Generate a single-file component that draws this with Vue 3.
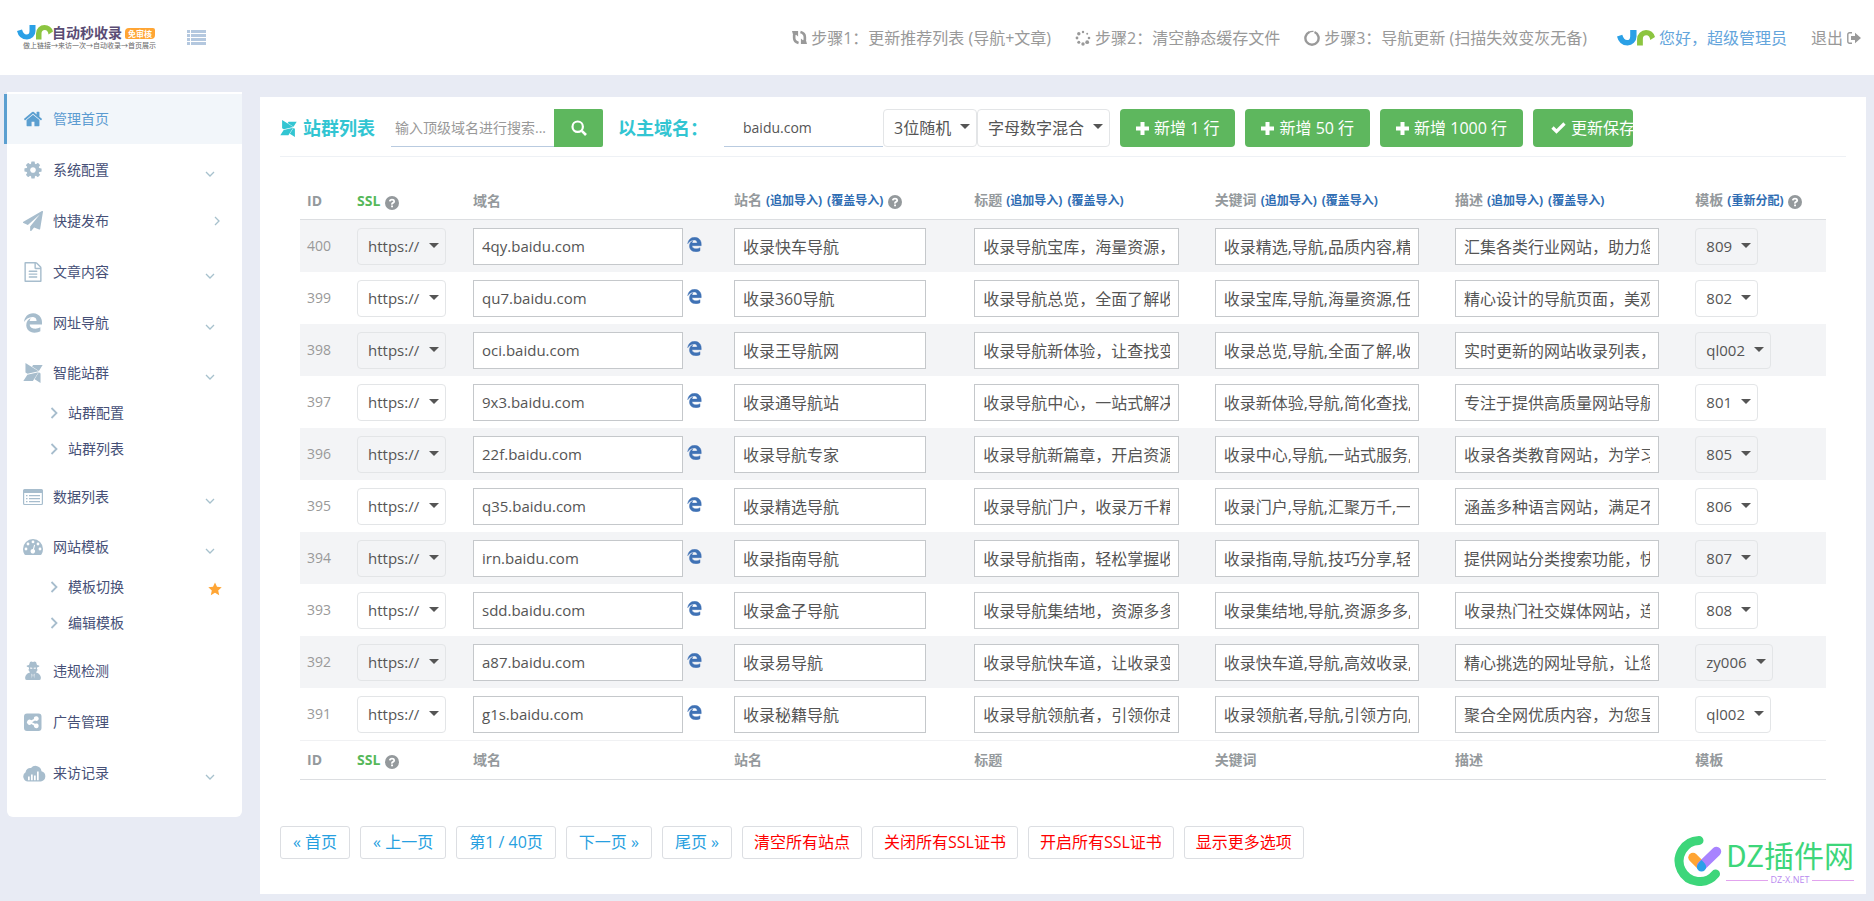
<script setup>
import { ref } from 'vue'

const icons = {
  home: { box: '0 0 1792 1792', d: 'M1472 992v480q0 26-19 45t-45 19h-384v-384h-256v384h-384q-26 0-45-19t-19-45v-480q0-1 .5-3t.5-3l575-474 575 474q1 2 1 6zm223-69l-62 74q-8 9-21 11h-3q-13 0-21-7l-692-577-692 577q-12 8-24 7-13-2-21-11l-62-74q-8-10-7-23.5t11-21.5l719-599q32-26 76-26t76 26l244 204v-195q0-14 9-23t23-9h192q14 0 23 9t9 23v408l219 182q10 8 11 21.5t-7 23.5z' },
  cog: { box: '0 0 1792 1792', d: 'M1152 896q0-106-75-181t-181-75-181 75-75 181 75 181 181 75 181-75 75-181zm512-109v222q0 12-8 23t-20 13l-185 28q-19 54-39 91 35 50 107 138 10 12 10 25t-9 23q-27 37-99 108t-94 71q-12 0-26-9l-138-108q-44 23-91 38-16 136-29 186-7 28-36 28h-222q-14 0-24.5-8.5t-11.5-21.5l-28-184q-49-16-90-37l-141 107q-10 9-25 9-14 0-25-11-126-114-165-168-7-10-7-23 0-12 8-23 15-21 51-66.5t54-70.5q-27-50-41-99l-183-27q-13-2-21-12.5t-8-23.5v-222q0-12 8-23t19-13l186-28q14-46 39-92-40-57-107-138-10-12-10-24 0-10 9-23 26-36 98.5-107.5t94.5-71.5q13 0 26 10l138 107q44-23 91-38 16-136 29-186 7-28 36-28h222q14 0 24.5 8.5t11.5 21.5l28 184q49 16 90 37l142-107q9-9 24-9 13 0 25 10 129 119 165 170 7 8 7 22 0 12-8 23-15 21-51 66.5t-54 70.5q26 50 41 98l183 28q13 2 21 12.5t8 23.5z' },
  plane: { box: '0 0 1792 1792', d: 'M1764 11q33 24 27 64l-256 1536q-5 29-32 45-14 8-31 8-11 0-24-5l-453-185-242 295q-18 23-49 23-13 0-22-4-19-7-30.5-23.5t-11.5-36.5v-349l864-1059-1069 925-395-162q-37-14-40-55-2-40 32-59l1664-960q15-9 32-9 20 0 36 11z' },
  file: { box: '0 0 1792 1792', d: 'M1596 380q28 28 48 76t20 88v1152q0 40-28 68t-68 28h-1344q-40 0-68-28t-28-68v-1600q0-40 28-68t68-28h896q40 0 88 20t76 48zm-444-244v376h376q-10-29-22-41l-313-313q-12-12-41-22zm384 1528v-1024h-416q-40 0-68-28t-28-68v-416h-768v1536h1280zm-1024-864q0-14 9-23t23-9h704q14 0 23 9t9 23v64q0 14-9 23t-23 9h-704q-14 0-23-9t-9-23v-64zm736 224q14 0 23 9t9 23v64q0 14-9 23t-23 9h-704q-14 0-23-9t-9-23v-64q0-14 9-23t23-9h704zm0 256q14 0 23 9t9 23v64q0 14-9 23t-23 9h-704q-14 0-23-9t-9-23v-64q0-14 9-23t23-9h704z' },
  edge: { box: '0 0 512 512', d: 'M25.714 228.163c.111-.162.23-.323.342-.485-.021.162-.045.323-.065.485h-.277zm460.572 15.508c0-44.032-7.754-84.465-28.801-122.405C416.498 47.879 343.912 8.001 258.893 8.001 118.962 7.724 40.617 113.214 26.056 227.679c42.429-61.312 117.073-121.376 220.375-124.966 0 0 109.666 0 99.419 104.957H169.997c6.369-37.386 18.554-58.986 34.339-78.926-75.048 34.893-121.85 96.1-120.742 188.315.83 71.448 50.124 144.836 120.743 171.976 83.357 31.847 192.776 7.2 240.132-21.323V363.307c-80.864 56.494-270.871 60.925-272.255-67.572h314.073v-52.064z' },
  modx: { box: '0 32 448 448', d: 'M356 241.8l36.7 23.7V480l-133-83.8L356 241.8zM440 75H226.3l-23 37.8 153.5 96.5L440 75zm-89 142.8L55.2 32v214.5l46 29L351 217.8zM97 294.2L8 437h213.7l125-200.5L97 294.2z' },
  list: { box: '0 0 20 20', d: 'M1.5 2h17A1.5 1.5 0 0 1 20 3.500v13a1.500 1.500 0 0 1-1.500 1.500h-17A1.500 1.500 0 0 1 0 16.500v-13A1.500 1.500 0 0 1 1.500 2zM1.200 6v10.500q0 .4.4.4h16.800q.4 0 .4-.4V6zM3 8h1.500v1.300H3zM6 8h11v1.300H6zM3 11h1.500v1.300H3zM6 11h11v1.300H6zM3 14h1.500v1.300H3zM6 14h11v1.300H6z' },
  gauge: { box: '0 0 20 20', d: 'M10 2A10 10 0 0 0 0 12q0 3 1.400 5.300.4.700 1.200.7h14.800q.8 0 1.200-.7Q20 15 20 12A10 10 0 0 0 10 2zM3 10.600a1.400 1.400 0 1 1 0 2.800 1.400 1.400 0 0 1 0-2.800zM5 5.600a1.400 1.400 0 1 1 0 2.800 1.400 1.400 0 0 1 0-2.800zM10 3.500a1.400 1.400 0 1 1 0 2.800 1.400 1.400 0 0 1 0-2.800zM15 5.600a1.400 1.400 0 1 1 0 2.800 1.400 1.400 0 0 1 0-2.800zM17 10.600a1.400 1.400 0 1 1 0 2.800 1.400 1.400 0 0 1 0-2.800zM11.100 7.700l1 .3-1.100 4.200a2.300 2.300 0 1 1-1-.3z' },
  spy: { box: '0 0 20 20', d: 'M7 1q1.200-.8 3 0 1.800-.8 3 0l1 3q2.500.4 2.500 1.100T14 6.400v2.100h.8q0 1-.9 1.200-.3 1-1 1.700l1 .3q3.600 1.300 4 5 .1 2.300-1.500 2.300H3.600Q2 19 2.100 16.700q.4-3.700 4-5l1-.3q-.7-.7-1-1.700-.9-.2-.9-1.200H6V6.400Q3.500 5.900 3.500 5.100T6 4zM7.200 6.600v1.200h2.100v-1zM10.700 6.800v1h2.100V6.600zM8.500 12.500l.9 1.200-.6 3.800zM11.500 12.500l-.9 1.200.6 3.800z' },
  share: { box: '0 0 20 20', d: 'M4 1.500h11.500a3 3 0 0 1 3 3V16a3 3 0 0 1-3 3H4a3 3 0 0 1-3-3V4.500a3 3 0 0 1 3-3zM13.300 4.200a2.400 2.400 0 0 0-2.400 2.700L8.300 8.300a2.600 2.600 0 1 0 0 3.800l2.600 1.400a2.400 2.400 0 1 0 1.100-1.700L9 10.200l3-1.600a2.400 2.400 0 1 0 1.300-4.400z' },
  cloud: { box: '0 0 23 18', d: 'M5 17.500A5 5 0 0 1 2.600 8.300 4.500 4.500 0 0 1 8 4a6 6 0 0 1 10.500 3.200A5.300 5.300 0 0 1 18 17.500zM5 12.500v3.700h1.700v-3.700zM8 10.500v5.700h1.700v-5.700zM11 11.500v4.700h1.700v-4.700zM14 7.500v8.700h1.700V7.500z' }
}
const markJ = 'M12.500 0h6v6a8.500 8.500 0 0 1-8.500 8.500Q2 14.500 0 6l5-1.500Q6.500 9.500 9.500 9.500q3 0 3-3.500z'
const markN = 'M19 14.500V8.500A8.500 8.500 0 0 1 27.500 0q6.500 0 8.500 6.500l-4.500 3Q31 5 27.800 5q-3.300 0-3.300 3.500v6z'

const menu = [
  { label: '管理首页', icon: 'home', active: true },
  { label: '系统配置', icon: 'cog', arrow: 'down' },
  { label: '快捷发布', icon: 'plane', arrow: 'right' },
  { label: '文章内容', icon: 'file', arrow: 'down' },
  { label: '网址导航', icon: 'edge', arrow: 'down' },
  { label: '智能站群', icon: 'modx', arrow: 'down', children: [{ label: '站群配置' }, { label: '站群列表' }] },
  { label: '数据列表', icon: 'list', arrow: 'down' },
  { label: '网站模板', icon: 'gauge', arrow: 'down', children: [{ label: '模板切换', star: true }, { label: '编辑模板' }] },
  { label: '违规检测', icon: 'spy' },
  { label: '广告管理', icon: 'share' },
  { label: '来访记录', icon: 'cloud', arrow: 'down' }
]

const columns = [
  { name: '站名', key: 'name', links: ['(追加导入)', '(覆盖导入)'], help: true },
  { name: '标题', key: 'title', links: ['(追加导入)', '(覆盖导入)'] },
  { name: '关键词', key: 'keys', links: ['(追加导入)', '(覆盖导入)'] },
  { name: '描述', key: 'desc', links: ['(追加导入)', '(覆盖导入)'] },
  { name: '模板', key: 'tpl', links: ['(重新分配)'], help: true }
]
const textColumns = columns.slice(0, 4)

const rows = ref([
  { id: 400, host: '4qy.baidu.com', name: '收录快车导航', title: '收录导航宝库，海量资源，一键直达', keys: '收录精选,导航,品质内容,精选资源', desc: '汇集各类行业网站，助力您的发展', tpl: '809' },
  { id: 399, host: 'qu7.baidu.com', name: '收录360导航', title: '收录导航总览，全面了解收录资源', keys: '收录宝库,导航,海量资源,任您选择', desc: '精心设计的导航页面，美观实用', tpl: '802' },
  { id: 398, host: 'oci.baidu.com', name: '收录王导航网', title: '收录导航新体验，让查找变得简单', keys: '收录总览,导航,全面了解,收录资源', desc: '实时更新的网站收录列表，随时查看', tpl: 'ql002' },
  { id: 397, host: '9x3.baidu.com', name: '收录通导航站', title: '收录导航中心，一站式解决需求', keys: '收录新体验,导航,简化查找,轻松', desc: '专注于提供高质量网站导航服务', tpl: '801' },
  { id: 396, host: '22f.baidu.com', name: '收录导航专家', title: '收录导航新篇章，开启资源之旅', keys: '收录中心,导航,一站式服务,便捷', desc: '收录各类教育网站，为学习助力', tpl: '805' },
  { id: 395, host: 'q35.baidu.com', name: '收录精选导航', title: '收录导航门户，收录万千精彩', keys: '收录门户,导航,汇聚万千,一网打尽', desc: '涵盖多种语言网站，满足不同需求', tpl: '806' },
  { id: 394, host: 'irn.baidu.com', name: '收录指南导航', title: '收录导航指南，轻松掌握收录技巧', keys: '收录指南,导航,技巧分享,轻松掌握', desc: '提供网站分类搜索功能，快速查找', tpl: '807' },
  { id: 393, host: 'sdd.baidu.com', name: '收录盒子导航', title: '收录导航集结地，资源多多分享', keys: '收录集结地,导航,资源多多,分享', desc: '收录热门社交媒体网站，连接你我', tpl: '808' },
  { id: 392, host: 'a87.baidu.com', name: '收录易导航', title: '收录导航快车道，让收录变得高效', keys: '收录快车道,导航,高效收录,快速', desc: '精心挑选的网址导航，让您省心', tpl: 'zy006' },
  { id: 391, host: 'g1s.baidu.com', name: '收录秘籍导航', title: '收录导航领航者，引领你走向成功', keys: '收录领航者,导航,引领方向,成功', desc: '聚合全网优质内容，为您呈现精彩', tpl: 'ql002' }
])

const addButtons = ['新增 1 行', '新增 50 行', '新增 1000 行']
const pageLinks = ['« 首页', '« 上一页', '第1 / 40页', '下一页 »', '尾页 »']
const actions = ['清空所有站点', '关闭所有SSL证书', '开启所有SSL证书', '显示更多选项']
const dots = [[8, 2, 1.2], [12.200, 3.800, 1], [14, 8, 1.300], [12.200, 12.200, 1.900], [8, 14, 1.700], [3.800, 12.200, 1.500], [2, 8, 1.400], [3.800, 3.800, 1.700]]
const mainHost = ref('baidu.com')
const keyword = ref('')
</script>

<template>
  <div class="page">
    <header class="topbar">
      <a class="brand" href="#" aria-label="自动秒收录">
        <svg class="mark" viewBox="0 0 36 15" aria-hidden="true">
          <path :d="markJ" fill="#2aa0e6" /><path :d="markN" fill="#8cc540" />
        </svg>
        <span class="brand-line"><b>自动秒收录</b><em>免审核</em></span>
        <small>做上链接→来访一次→自动收录→首页展示</small>
      </a>
      <button class="toggler" type="button" aria-label="菜单">
        <svg viewBox="0 0 19 15" width="19" height="15" aria-hidden="true">
          <path d="M0 0h3v3H0zM4 0h15v3H4zM0 4h3v3H0zM4 4h15v3H4zM0 8h3v3H0zM4 8h15v3H4zM0 12h3v3H0zM4 12h15v3H4z" fill="#b4c8df" />
        </svg>
      </button>
      <nav class="steps">
        <a href="#">
          <svg viewBox="0 0 16 16" width="15" height="15" fill="none" stroke="currentColor" stroke-width="2.800" aria-hidden="true">
            <path d="M7 13.800Q2.300 12.500 2.300 8.500V5M9 2.200q4.700 1.300 4.700 5.300V11" />
            <path d="M0 1h6.500v6L4.300 5 1.500 6.500zM16 15H9.500V9l2.200 2 2.800-1.500z" fill="currentColor" stroke="none" />
          </svg>步骤1：更新推荐列表 (导航+文章)</a>
        <a href="#">
          <svg viewBox="0 0 16 16" width="16" height="16" fill="currentColor" aria-hidden="true">
            <circle v-for="(d, i) in dots" :key="i" :cx="d[0]" :cy="d[1]" :r="d[2]" />
          </svg>步骤2：清空静态缓存文件</a>
        <a href="#">
          <svg viewBox="0 0 16 16" width="16" height="16" aria-hidden="true">
            <path d="M10.500 2A6.600 6.600 0 1 1 5.500 2" fill="none" stroke="currentColor" stroke-width="2.400" />
            <path d="M5 2.300Q6.500 1.300 9.500 1.400" fill="none" stroke="currentColor" stroke-width="1.400" />
          </svg>步骤3：导航更新 (扫描失效变灰无备)</a>
        <a class="user" href="#">
          <svg class="mark" viewBox="0 0 36 15" aria-hidden="true">
            <path :d="markJ" fill="#2aa0e6" /><path :d="markN" fill="#8cc540" />
          </svg>您好，超级管理员</a>
        <a href="#">退出<svg viewBox="0 0 14 12" width="14" height="12" aria-hidden="true">
            <path d="M5 .8H2.500A1.700 1.700 0 0 0 .8 2.500v7a1.700 1.700 0 0 0 1.700 1.700H5" fill="none" stroke="currentColor" stroke-width="1.400" />
            <path d="M4 4h4V.8L14 6l-6 5.200V8H4z" fill="currentColor" />
          </svg></a>
      </nav>
    </header>

    <div class="body">
      <aside class="sidebar">
        <ul>
          <li v-for="m in menu" :key="m.label" :class="{ active: m.active, open: m.children }">
            <a class="item" href="#">
              <svg class="mi" :class="m.icon" :viewBox="icons[m.icon].box" aria-hidden="true">
                <path :d="icons[m.icon].d" fill="currentColor" fill-rule="evenodd" />
              </svg>
              <span>{{ m.label }}</span>
              <svg v-if="m.arrow" class="arrow" :class="m.arrow" viewBox="0 0 10 10" aria-hidden="true">
                <path :d="m.arrow === 'down' ? 'M1 3l4 4 4-4' : 'M3 1l4 4-4 4'" fill="none" stroke="currentColor" stroke-width="1.300" />
              </svg>
            </a>
            <ul v-if="m.children" class="sub">
              <li v-for="c in m.children" :key="c.label">
                <a href="#">
                  <svg viewBox="0 0 8 12" width="8" height="12" aria-hidden="true"><path d="M1.500 1l5 5-5 5" fill="none" stroke="#a7bdcd" stroke-width="1.800" /></svg>
                  <span>{{ c.label }}</span>
                  <svg v-if="c.star" class="star" viewBox="0 0 14 14" aria-hidden="true"><path d="M7 .5l2 4.300 4.700.5-3.500 3.200 1 4.700L7 10.800l-4.200 2.400 1-4.700L.3 5.300 5 4.800z" fill="#ffa534" /></svg>
                </a>
              </li>
            </ul>
          </li>
        </ul>
      </aside>

      <main class="card">
        <form class="toolbar" @submit.prevent>
          <h1>
            <svg :viewBox="icons.modx.box" width="17" height="17" aria-hidden="true"><path :d="icons.modx.d" fill="currentColor" /></svg>站群列表
          </h1>
          <input v-model="keyword" class="line search" type="text" placeholder="输入顶级域名进行搜索..." aria-label="搜索域名">
          <button class="green find" type="submit" aria-label="搜索">
            <svg viewBox="0 0 16 16" width="16" height="16" aria-hidden="true"><path d="M10.800 10.800L15 15" stroke="#fff" stroke-width="2.600" /><circle cx="6.700" cy="6.700" r="5.200" fill="none" stroke="#fff" stroke-width="2.200" /></svg>
          </button>
          <label class="main-label" for="main-host">以主域名：</label>
          <input id="main-host" v-model="mainHost" class="line host" type="text">
          <span class="pick cjk"><select aria-label="随机位数"><option>3位随机</option></select></span>
          <span class="pick cjk"><select aria-label="组合方式"><option>字母数字混合</option></select></span>
          <button v-for="b in addButtons" :key="b" class="green add" type="button">
            <svg viewBox="0 0 13 13" width="13" height="13" aria-hidden="true"><path d="M4.500 0h4v4.500H13v4H8.500V13h-4V8.500H0v-4h4.500z" fill="#fff" /></svg>{{ b }}
          </button>
          <button class="green save" type="button">
            <svg viewBox="0 0 15 12" width="15" height="12" aria-hidden="true"><path d="M1.500 5.500l4 4 8-8" fill="none" stroke="#fff" stroke-width="3.200" /></svg>更新保存
          </button>
        </form>

        <div class="table-wrap">
          <table>
            <colgroup>
              <col class="c-id"><col class="c-ssl"><col class="c-host">
              <col v-for="c in textColumns" :key="c.key" class="c-text"><col>
            </colgroup>
            <thead>
              <tr>
                <th>ID</th>
                <th><span class="ssl">SSL</span><svg class="help" viewBox="0 0 14 14" role="img" aria-label="帮助"><circle cx="7" cy="7" r="7" fill="#94999c" /><path d="M4.800 5.400Q5 3.600 7 3.600t2.200 1.600Q9.200 6.300 8 6.900T7 8.600" fill="none" stroke="#fff" stroke-width="1.800" /><path d="M6.100 9.600h1.900v1.700H6.100z" fill="#fff" /></svg></th>
                <th>域名</th>
                <th v-for="c in columns" :key="c.key">{{ c.name }}<a v-for="l in c.links" :key="l" href="#">{{ l }}</a><svg v-if="c.help" class="help" viewBox="0 0 14 14" role="img" aria-label="帮助"><circle cx="7" cy="7" r="7" fill="#94999c" /><path d="M4.800 5.400Q5 3.600 7 3.600t2.200 1.600Q9.200 6.300 8 6.900T7 8.600" fill="none" stroke="#fff" stroke-width="1.800" /><path d="M6.100 9.600h1.900v1.700H6.100z" fill="#fff" /></svg></th>
              </tr>
            </thead>
            <tbody>
              <tr v-for="r in rows" :key="r.id">
                <td class="id">{{ r.id }}</td>
                <td><span class="pick"><select :aria-label="'协议 ' + r.id"><option>https://</option></select></span></td>
                <td>
                  <div class="host-cell">
                    <input v-model="r.host" type="text" :aria-label="'域名 ' + r.id">
                    <a href="#" aria-label="访问"><svg :viewBox="icons.edge.box" width="15" height="15" aria-hidden="true"><path :d="icons.edge.d" fill="#3f72b5" stroke="#3f72b5" stroke-width="14" /></svg></a>
                  </div>
                </td>
                <td v-for="c in textColumns" :key="c.key" :class="c.key">
                  <input v-model="r[c.key]" type="text" :aria-label="c.name + ' ' + r.id">
                </td>
                <td><span class="pick"><select :aria-label="'模板 ' + r.id"><option>{{ r.tpl }}</option></select></span></td>
              </tr>
            </tbody>
            <tfoot>
              <tr>
                <th>ID</th>
                <th><span class="ssl">SSL</span><svg class="help" viewBox="0 0 14 14" role="img" aria-label="帮助"><circle cx="7" cy="7" r="7" fill="#94999c" /><path d="M4.800 5.400Q5 3.600 7 3.600t2.200 1.600Q9.200 6.300 8 6.900T7 8.600" fill="none" stroke="#fff" stroke-width="1.800" /><path d="M6.100 9.600h1.900v1.700H6.100z" fill="#fff" /></svg></th>
                <th>域名</th>
                <th v-for="c in columns" :key="c.key">{{ c.name }}</th>
              </tr>
            </tfoot>
          </table>
        </div>

        <div class="pager">
          <a v-for="p in pageLinks" :key="p" href="#">{{ p }}</a>
          <button v-for="a in actions" :key="a" type="button">{{ a }}</button>
        </div>

        <div class="stamp">
          <svg viewBox="0 0 48 50" width="48" height="50" fill="none" stroke-linecap="round" aria-hidden="true">
            <path d="M25 4.500A20.500 20.500 0 1 0 41.500 38" stroke="#3dd67a" stroke-width="9" />
            <path d="M19 21.500L27.500 30" stroke="#ffa534" stroke-width="9.500" />
            <path d="M42.500 15.500L27.500 30" stroke="#a883ff" stroke-width="9.500" />
            <path d="M27.500 24q5 4.500 4.600 7a4.600 4.600 0 0 1-9.200 0q0-2.500 4.600-7z" fill="#28a0e8" />
          </svg>
          <div>
            <strong>DZ插件网</strong>
            <span>DZ-X.NET</span>
          </div>
        </div>
      </main>
    </div>
  </div>
</template>

<style>
body { margin: 0; background: #e8ebf4; }
</style>

<style scoped>
.page {
  font: 14px/20px "Open Sans", "Noto Sans CJK SC", sans-serif;
  color: #555;
}
.page * { box-sizing: border-box; }
a { text-decoration: none; color: inherit; }
ul { list-style: none; margin: 0; padding: 0; }
button, input, select { font: inherit; color: inherit; margin: 0; }
svg { flex: none; }

.topbar {
  display: flex;
  align-items: center;
  height: 75px;
  padding: 0 13px 0 17px;
  background: #fff;
}
.brand {
  display: grid;
  grid-template-columns: 36px auto;
  width: 139px;
  line-height: 16px;
}
.mark { width: 36px; height: 15px; }
.brand-line { display: flex; align-items: center; gap: 3px; white-space: nowrap; }
.brand b { font-size: 14px; color: #5a4c74; margin-left: -1px; }
.brand em {
  background: #ffa534;
  color: #fff;
  font: bold 8px/11px "Noto Sans CJK SC", sans-serif;
  padding: 0 3px;
  border-radius: 4px 2px;
}
.brand small {
  grid-column: 1 / 3;
  font: 7px/9px "Noto Sans CJK SC", sans-serif;
  color: #666;
  padding-left: 6px;
  white-space: nowrap;
}
.toggler { display: flex; margin-left: 31px; padding: 0; border: 0; background: none; }
.steps {
  display: flex;
  gap: 24px;
  margin-left: auto;
  font-size: 16px;
  line-height: 24px;
  color: #999;
  white-space: nowrap;
}
.steps a { display: flex; align-items: center; gap: 4px; }
.steps .user { color: #64a5dc; margin-left: 6px; }
.steps .mark { width: 38px; height: 16px; }

.body { display: flex; align-items: flex-start; gap: 18px; padding: 17px 8px 7px 7px; }

.sidebar {
  flex: none;
  width: 235px;
  padding: 2px 0 19px;
  background: #fff;
  border-radius: 0 0 6px 6px;
  color: #465077;
}
.item { display: flex; align-items: center; height: 51px; padding: 0 20px 0 16px; }
.item span { flex: 1; margin-left: 10px; }
.mi { width: 20px; height: 20px; color: #a7bdcd; }
.mi.cloud { width: 23px; height: 18px; margin-right: -3px; }
.active .item {
  height: 50px;
  margin-left: -3px;
  border-left: 3px solid #5b9fd0;
  background: #f2f6fa;
  color: #5b9bd1;
}
.active .mi { color: #5b9fd0; }
.arrow { width: 10px; height: 10px; color: #a7c1cd; }
.arrow.down { margin: 9px 7px 0 0; }
.open .item { height: 47px; padding-top: 2px; }
.sub { padding-bottom: 4px; }
.sub a { display: flex; align-items: center; height: 36px; padding: 0 20px 0 43px; }
.sub span { flex: 1; margin-left: 10px; }
.star { width: 14px; height: 14px; margin-top: 3px; }

.card { flex: 1; min-width: 0; position: relative; padding: 12px 20px 35px; margin-top: 5px; background: #fff; }
.toolbar {
  display: flex;
  align-items: center;
  padding-bottom: 9px;
  border-bottom: 1px solid #eef1f5;
  font-size: 16px;
}
h1, .main-label { font-size: 18px; font-weight: bold; color: #32c5d2; margin: 0; white-space: nowrap; }
h1 { display: flex; align-items: center; gap: 6px; margin-right: 16px; }
.line { height: 38px; border: 0; border-bottom: 1px solid #b9cbe0; background: #fff; font-size: 14px; outline: 0; }
.line::placeholder { color: #999; opacity: 1; }
.search { width: 163px; padding: 0 4px; }
.host { width: 159px; padding: 0 19px; margin-left: 16px; }
.main-label { margin-left: 15px; width: 90px; }
.green {
  display: flex;
  align-items: center;
  gap: 5px;
  height: 38px;
  padding: 0 16px;
  border: 0;
  border-radius: 4px;
  background: #5eb75e;
  color: #fff;
  white-space: nowrap;
}
.find { width: 49px; padding: 0; justify-content: center; border-radius: 0 2px 2px 0; }
.add, .save { margin-left: 10px; }
.save { width: 100px; padding: 0 0 0 18px; overflow: hidden; }

.pick { display: inline-block; position: relative; vertical-align: middle; }
.pick select {
  appearance: none;
  display: block;
  height: 38px;
  padding: 0 25px 0 10px;
  border: 1px solid #e3e5e7;
  border-radius: 4px;
  background: transparent;
  font-size: 15px;
}
.pick.cjk select { font-size: 16px; padding-right: 24px; }
.pick::after {
  content: "";
  position: absolute;
  right: 7px;
  top: 15px;
  border: 5px solid transparent;
  border-top-color: #555;
  border-bottom: 0;
  pointer-events: none;
}

.table-wrap { margin: 25px 20px 0; }
table { width: 100%; table-layout: fixed; border-spacing: 0; }
.c-id { width: 50px; }
.c-ssl { width: 116px; }
.c-host { width: 17.1%; }
.c-text { width: 15.75%; }
th, td { padding: 0 7px; text-align: left; white-space: nowrap; }
th { height: 38px; color: #94999c; font-weight: bold; }
thead th, tfoot th { border-bottom: 1px solid #dcdee1; }
tfoot th { border-top: 1px solid #f0f1f3; height: 40px; }
th a { margin-left: 4px; font-size: 12px; color: #2f6db3; }
th a + a { margin-left: 5px; }
.ssl { color: #56b85a; }
.help { width: 14px; height: 14px; margin-left: 5px; vertical-align: -4px; }
td { height: 52px; }
tbody tr:nth-child(odd) { background: #f3f4f6; }
.id { color: #999; }
td input {
  width: 100%;
  height: 37px;
  padding: 0 8px;
  border: 1px solid #c5c8cb;
  background: #fff;
  font-size: 16px;
  vertical-align: middle;
}
td .pick select { height: 37px; }
td.name input { width: calc(100% - 34px); }
td.title input, td.keys input, td.desc input { width: calc(100% - 22px); }
.host-cell { display: flex; align-items: center; gap: 4px; padding-right: 18px; }
.host-cell input { flex: 1; min-width: 0; font-size: 15px; }
.host-cell a { display: flex; padding-bottom: 4px; }

.pager { display: flex; flex-wrap: wrap; gap: 10px; margin-top: 46px; font-size: 16px; }
.pager a, .pager button {
  height: 33px;
  line-height: 31px;
  padding: 0 12px;
  border: 1px solid #dcdee2;
  border-radius: 3px;
  background: #fff;
  color: #279fe0;
  white-space: nowrap;
}
.pager button { padding: 0 11px; color: #f00; }

.stamp { position: absolute; right: 12px; bottom: 8px; display: flex; gap: 4px; }
.stamp strong {
  display: block;
  font: 400 30px/36px "Noto Sans CJK SC", sans-serif;
  color: #3dd67a;
}
.stamp span { display: flex; align-items: center; gap: 3px; margin-top: 3px; font-size: 9px; line-height: 10px; color: #b98af0; }
.stamp span::before, .stamp span::after { content: ""; flex: 1; height: 1px; background: #e2a3ee; }
</style>
